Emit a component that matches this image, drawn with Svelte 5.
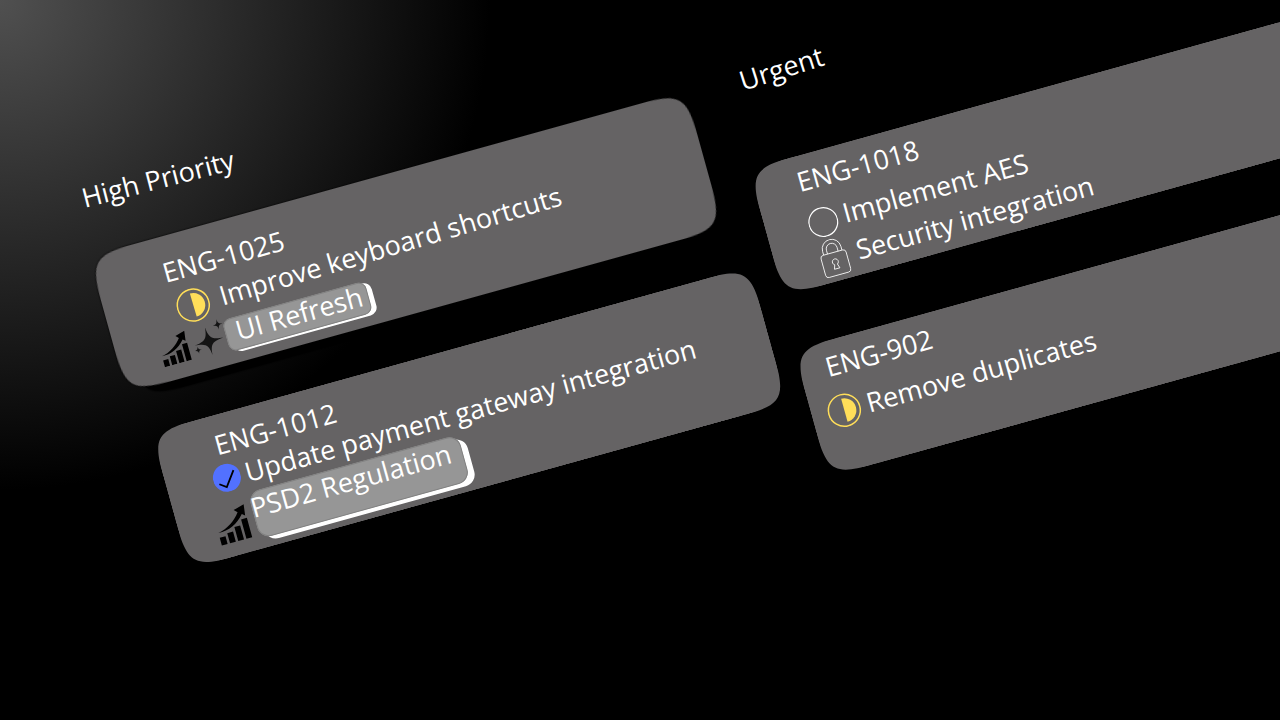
<script lang="ts">
  type Mark = 'half' | 'done' | 'open' | 'lock' | 'chart' | 'spark';
  type Row = { marks: Mark[]; text: string; tag?: boolean };
  type Card = { id: string; key: string; rows: Row[] };
  type Column = { name: string; title: string; cards: Card[] };

  const columns: Column[] = [
    {
      name: 'high',
      title: 'High Priority',
      cards: [
        {
          id: 'ENG-1025',
          key: 'keyboard',
          rows: [
            { marks: ['half'], text: 'Improve keyboard shortcuts' },
            { marks: ['chart', 'spark'], text: 'UI Refresh', tag: true },
          ],
        },
        {
          id: 'ENG-1012',
          key: 'payment',
          rows: [
            { marks: ['done'], text: 'Update payment gateway integration' },
            { marks: ['chart'], text: 'PSD2 Regulation', tag: true },
          ],
        },
      ],
    },
    {
      name: 'urgent',
      title: 'Urgent',
      cards: [
        {
          id: 'ENG-1018',
          key: 'security',
          rows: [
            { marks: ['open'], text: 'Implement AES' },
            { marks: ['lock'], text: 'Security integration' },
          ],
        },
        {
          id: 'ENG-902',
          key: 'duplicates',
          rows: [{ marks: ['half'], text: 'Remove duplicates' }],
        },
      ],
    },
  ];
</script>

{#snippet icon(mark: Mark)}
  {#if mark === 'half'}
    <svg class="icon half" viewBox="0 0 34 34" aria-hidden="true">
      <circle cx="17" cy="17" r="16" fill="none" stroke="#ffde59" stroke-width="1.5" />
      <path d="M17 5a12 12 0 0 1 0 24z" fill="#ffde59" />
    </svg>
  {:else if mark === 'done'}
    <svg class="icon done" viewBox="0 0 28 28" aria-hidden="true">
      <circle cx="14" cy="14" r="14" fill="#5271ff" />
      <path d="M5 18.3 11.4 23 22.3 8.4" fill="none" stroke="#000" stroke-width="1.8" />
    </svg>
  {:else if mark === 'open'}
    <svg class="icon open" viewBox="0 0 30 30" aria-hidden="true">
      <circle cx="15" cy="15" r="14.4" fill="none" stroke="#fff" stroke-width="1.2" />
    </svg>
  {:else if mark === 'lock'}
    <svg class="icon lock" viewBox="0 0 28 38" aria-hidden="true">
      <g fill="none" stroke="#fff" stroke-width="0.8">
        <rect x="1" y="14" width="26" height="23" rx="3" />
        <path d="M4.500 14V10a9.500 9.500 0 0 1 19 0v4" />
        <path d="M8.500 14V10a5.500 5.500 0 0 1 11 0v4" />
        <path d="M12.600 26.200a3 3 0 1 1 2.800 0l1.400 4.300h-5.600z" />
      </g>
    </svg>
  {:else if mark === 'chart'}
    <svg class="icon chart" viewBox="0 0 34 34" aria-hidden="true">
      <path d="M1 26h6v8H1zM9.500 23.500h6V34h-6zM18 19.500h6V34h-6zM26.500 14h6v20h-6z" />
      <path d="M1 21C11 19.500 19.500 13.500 25 6.200L21.800 3 33 0 31.500 11.200 28.600 9C21 17.500 12 22 1 21z" />
    </svg>
  {:else}
    <svg class="icon spark" viewBox="0 0 34 34" aria-hidden="true">
      <path d="M16 5c1 11 3 14 15 15-12 1-14 3-15 14-1-11-3-13-15-14 12-1 14-4 15-15z" />
      <path d="M29 .5c.5 4 1.200 5 5 5.500-3.800.5-4.500 1.200-5 5-.5-3.800-1.200-4.500-5-5 3.800-.5 4.500-1.500 5-5.500z" />
      <path d="M3.500 22c.4 2.400 1 3.100 3.500 3.500-2.500.4-3.100 1-3.500 3.500-.4-2.500-1-3.100-3.500-3.500 2.500-.4 3.100-1.100 3.500-3.500z" />
    </svg>
  {/if}
{/snippet}

<main class="page">
  <div class="board">
    {#each columns as column (column.name)}
      <section class="column {column.name}">
        <h2>{column.title}</h2>
        {#each column.cards as card (card.id)}
          <article class="card {card.key}">
            <h3>{card.id}</h3>
            {#each card.rows as row (row.text)}
              <div class="row" class:tagged={row.tag}>
                {#each row.marks as mark (mark)}{@render icon(mark)}{/each}
                <span class={row.tag ? 'tag' : 'label'}>{row.text}</span>
              </div>
            {/each}
          </article>
        {/each}
      </section>
    {/each}
  </div>
</main>

<style>
  :global(body) {
    margin: 0;
    background: #000;
  }

  .page {
    height: 100vh;
    overflow: hidden;
    background: radial-gradient(circle at 0 0, #505050, #000 490px);
    color: #fff;
    font: 400 27px/36px 'Open Sans', 'Noto Sans', sans-serif;
  }

  .board {
    box-sizing: border-box;
    width: calc(100vw + 20px);
    padding: 195px 0 0 17px;
    display: grid;
    grid-template-columns: 1fr 1fr;
    column-gap: 24px;
    align-items: start;
    white-space: nowrap;
    transform: rotate(-15.5deg);
    transform-origin: 0 0;
  }

  .column {
    display: flex;
    flex-direction: column;
    gap: 44px;
  }

  .urgent {
    padding-top: 64px;
    gap: 54px;
  }

  h2,
  h3 {
    margin: 0;
    font: inherit;
  }

  h2 {
    margin-bottom: -4px;
    padding-left: 9px;
    transform: rotate(1deg);
    transform-origin: 0 100%;
  }

  .urgent h2 {
    margin-bottom: 14px;
    padding-left: 21px;
    transform: rotate(-2deg);
  }

  .card {
    position: relative;
    z-index: 0;
    box-sizing: border-box;
    width: calc(100% - 11px);
    min-height: 142px;
    padding-top: 18px;
  }

  /* Squircle corners, sliced from a vector tile so the card can be any size.
     The inset fill closes the hairlines between the slices. */
  .card::before {
    content: '';
    position: absolute;
    inset: 0;
    z-index: -1;
    border: 50px solid transparent;
    border-image: url("data:image/svg+xml,%3Csvg xmlns='http://www.w3.org/2000/svg' width='120' height='120'%3E%3Cpath fill='%23656364' d='M0 46C0 6 6 0 46 0H74C114 0 120 6 120 46V74C120 114 114 120 74 120H46C6 120 0 114 0 74z'/%3E%3C/svg%3E") 50 fill;
    background: linear-gradient(#656364, #656364) center / calc(100% - 32px) calc(100% - 32px) no-repeat border-box;
    background-origin: border-box;
  }

  .keyboard::before {
    filter: drop-shadow(0 0 1px #000) drop-shadow(14px 9px 0 #000);
  }

  .payment {
    width: calc(100% - 9px);
    margin-left: 13px;
    padding-top: 12px;
  }

  .security,
  .duplicates {
    width: 100%;
    min-height: 132px;
    padding-top: 8px;
  }

  .security {
    width: calc(100% - 45px);
    margin-left: 5px;
  }

  .row {
    display: flex;
    align-items: flex-end;
  }

  .icon {
    flex: none;
  }

  .half {
    width: 34px;
    height: 34px;
  }

  .done {
    width: 28px;
    height: 28px;
  }

  .open {
    width: 30px;
    height: 30px;
  }

  .lock {
    width: 28px;
    height: 38px;
    margin-bottom: -2px;
  }

  .chart {
    width: 30px;
    height: 30px;
    margin-bottom: 3px;
  }

  .spark {
    width: 34px;
    height: 34px;
    margin: 0 -2px 2px 2px;
    fill: #141414;
  }

  .tag {
    padding: 0 6px 6px 11px;
    border-radius: 8px;
    background: #969696;
    box-shadow: inset 0 0 0 1px #828282, 5px 2px 0 0 #fff;
    line-height: 27px;
  }

  .keyboard h3 {
    padding-left: 67px;
  }

  .keyboard .row {
    gap: 11px;
    margin-top: 1px;
    padding-left: 71px;
    transform: rotate(-1deg);
    transform-origin: 20% 100%;
  }

  .keyboard .tagged {
    gap: 2px;
    margin-top: 3px;
    padding-left: 43px;
    transform: none;
  }

  .payment h3 {
    padding-left: 58px;
  }

  .payment .row {
    align-items: center;
    gap: 5px;
    margin-top: -2px;
    padding-left: 47px;
  }

  .payment .tagged {
    align-items: flex-end;
    gap: 6px;
    margin-top: 2px;
    padding-left: 37px;
  }

  .payment .chart {
    width: 34px;
    height: 36px;
  }

  .payment .tag {
    padding: 2px 12px 19px 0;
    border-radius: 12px;
    box-shadow: inset 0 0 0 1px #828282, 6px 4px 0 0 #fff;
    text-indent: -1px;
  }

  .security h3 {
    padding-left: 44px;
  }

  .security .row {
    gap: 7px;
    margin-top: 6px;
    padding-left: 43px;
  }

  .security .row + .row {
    gap: 10px;
    margin-top: 3px;
    padding-left: 45px;
  }

  .duplicates h3 {
    padding-left: 27px;
  }

  .duplicates .row {
    gap: 7px;
    margin-top: 9px;
    padding-left: 16px;
  }
</style>
